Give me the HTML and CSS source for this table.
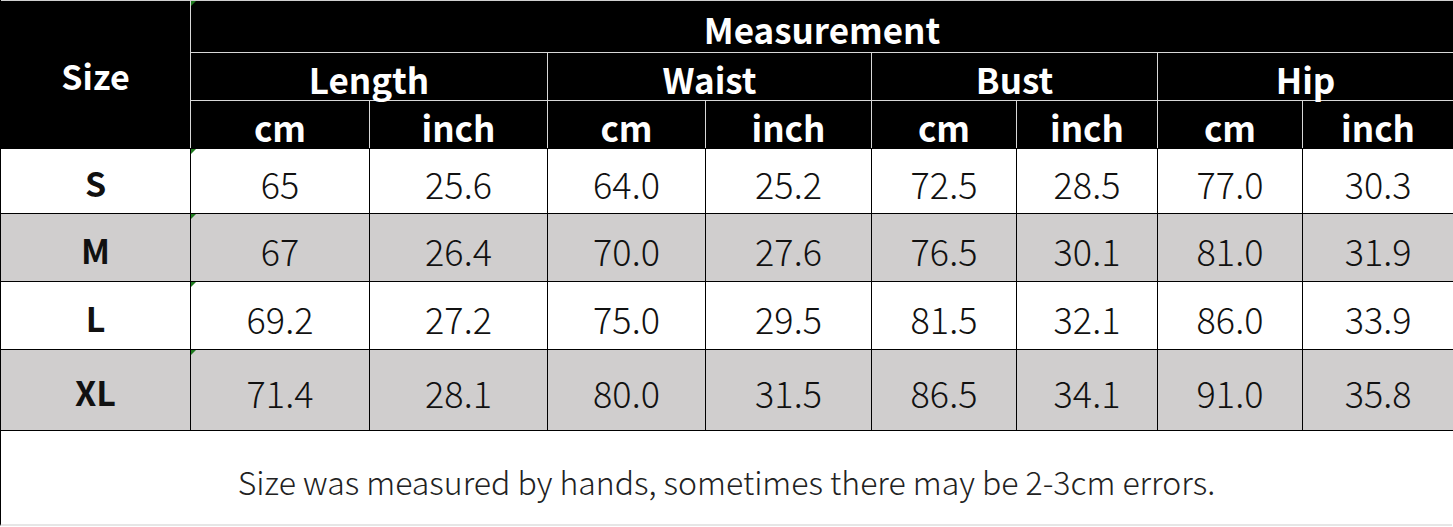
FILE: index.html
```html
<!DOCTYPE html>
<html>
<head>
    <meta charset="UTF-8">
    <title>Size Chart</title>
    <link rel="stylesheet" href="styles.css">
</head>
<body>
    <table class="chart">
        <colgroup>
            <col class="c-size">
            <col class="c-len-cm"><col class="c-len-in">
            <col class="c-waist-cm"><col class="c-waist-in">
            <col class="c-bust-cm"><col class="c-bust-in">
            <col class="c-hip-cm"><col class="c-hip-in">
        </colgroup>
        <thead>
            <tr class="h1">
                <th rowspan="3" class="size-head">Size</th>
                <th colspan="8" class="flag">Measurement</th>
            </tr>
            <tr class="h2">
                <th colspan="2">Length</th>
                <th colspan="2">Waist</th>
                <th colspan="2">Bust</th>
                <th colspan="2">Hip</th>
            </tr>
            <tr class="h3">
                <th>cm</th><th>inch</th>
                <th>cm</th><th>inch</th>
                <th>cm</th><th>inch</th>
                <th>cm</th><th>inch</th>
            </tr>
        </thead>
        <tbody>
            <tr class="r-s">
                <td class="size">S</td>
                <td class="flag">65</td><td>25.6</td>
                <td>64.0</td><td>25.2</td>
                <td>72.5</td><td>28.5</td>
                <td>77.0</td><td>30.3</td>
            </tr>
            <tr class="r-m shade">
                <td class="size">M</td>
                <td class="flag">67</td><td>26.4</td>
                <td>70.0</td><td>27.6</td>
                <td>76.5</td><td>30.1</td>
                <td>81.0</td><td>31.9</td>
            </tr>
            <tr class="r-l">
                <td class="size">L</td>
                <td class="flag">69.2</td><td>27.2</td>
                <td>75.0</td><td>29.5</td>
                <td>81.5</td><td>32.1</td>
                <td>86.0</td><td>33.9</td>
            </tr>
            <tr class="r-xl shade">
                <td class="size">XL</td>
                <td class="flag">71.4</td><td>28.1</td>
                <td>80.0</td><td>31.5</td>
                <td>86.5</td><td>34.1</td>
                <td>91.0</td><td>35.8</td>
            </tr>
        </tbody>
    </table>
    <div class="note">Size was measured by hands, sometimes there may be 2-3cm errors.</div>
</body>
</html>
```

FILE: styles.css
```css
body {
    margin: 0;
    padding: 0;
    background-color: #fff;
    font-family: "Noto Sans CJK SC", "Noto Sans", sans-serif;
    color: #111;
}
.chart {
    border-collapse: collapse;
    table-layout: fixed;
    width: 1453px;
    border-top: 1px solid #d0d0d0;
}
.c-size { width: 190px; }
.c-len-cm { width: 179px; }
.c-len-in { width: 178px; }
.c-waist-cm { width: 158px; }
.c-waist-in { width: 166px; }
.c-bust-cm { width: 145px; }
.c-bust-in { width: 141px; }
.c-hip-cm { width: 145px; }
.c-hip-in { width: 151px; }

/* header */
.chart th {
    background-color: #000;
    color: #fff;
    font-weight: 700;
    font-size: 35px;
    padding: 3px 0 0;
    text-align: center;
    vertical-align: middle;
    border: 1px solid #d8d8d8;
    line-height: 1;
}
.chart th.size-head {
    font-size: 34px;
    border-left: 1px solid #000;
    border-bottom-color: #000;
}
.h1 { height: 52px; }
.h1 th { border-top: none; }
.h2 { height: 48px; }
.h3 { height: 48px; }
.h3 th { border-bottom: 1px solid #000; }

/* body */
.chart td {
    border: 1px solid #000;
    text-align: center;
    vertical-align: middle;
    font-size: 36px;
    font-weight: 300;
    padding: 4px 0 0;
    line-height: 1;
}
.chart td.size {
    font-size: 34px;
    font-weight: 700;
}
.shade td {
    background-color: #d0cece;
}
.r-s { height: 65px; }
.r-m { height: 68px; }
.r-l { height: 68px; }
.r-xl { height: 81px; }

/* little green corner marks */
.flag {
    position: relative;
}
.flag::before {
    content: "";
    position: absolute;
    left: 0;
    top: 0;
    border-top: 5px solid #1e7b1e;
    border-right: 5px solid transparent;
}

.note {
    width: 1452px;
    height: 95px;
    border-left: 1px solid #000;
    border-bottom: 2px solid #e6e6e6;
    box-sizing: border-box;
    display: flex;
    align-items: center;
    justify-content: center;
    padding-top: 6px;
    font-size: 32px;
    font-weight: 300;
    color: #222;
}
```
